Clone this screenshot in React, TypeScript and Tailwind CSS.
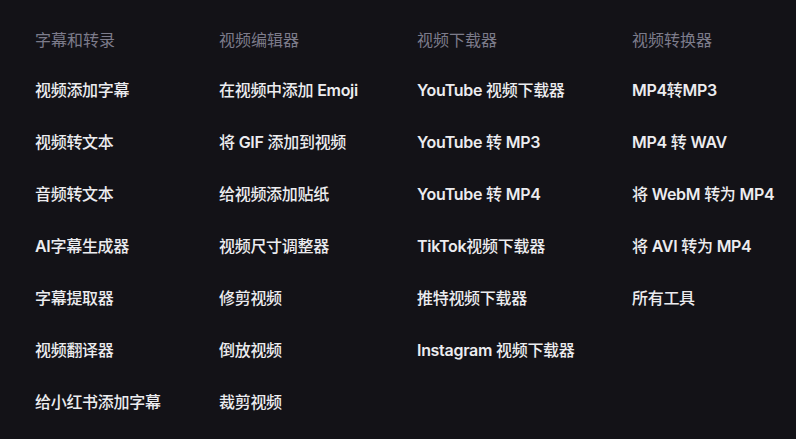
import React from "react";

const columns: { title: string; items: string[]; w: string }[] = [
  {
    title: "字幕和转录",
    w: "w-[184px]",
    items: ["视频添加字幕", "视频转文本", "音频转文本", "AI字幕生成器", "字幕提取器", "视频翻译器", "给小红书添加字幕"],
  },
  {
    title: "视频编辑器",
    w: "w-[198px]",
    items: ["在视频中添加 Emoji", "将 GIF 添加到视频", "给视频添加贴纸", "视频尺寸调整器", "修剪视频", "倒放视频", "裁剪视频"],
  },
  {
    title: "视频下载器",
    w: "w-[215px]",
    items: ["YouTube 视频下载器", "YouTube 转 MP3", "YouTube 转 MP4", "TikTok视频下载器", "推特视频下载器", "Instagram 视频下载器"],
  },
  {
    title: "视频转换器",
    w: "w-[164px]",
    items: ["MP4转MP3", "MP4 转 WAV", "将 WebM 转为 MP4", "将 AVI 转为 MP4", "所有工具"],
  },
];

function Label({ text }: { text: string }) {
  const parts = text.split(/([A-Za-z0-9]+)/).filter((p) => p.length > 0);
  return (
    <>
      {parts.map((p, i) =>
        /^[A-Za-z0-9]+$/.test(p) ? (
          <span key={i} className="font-semibold">
            {p}
          </span>
        ) : (
          <span key={i}>{p}</span>
        )
      )}
    </>
  );
}

export default function App() {
  return (
    <div
      className="w-[796px] h-[439px] bg-[#131217] overflow-hidden"
      style={{ fontFamily: 'Inter, "Noto Sans CJK SC", sans-serif' }}
    >
      <div className="flex pl-[35px] pt-[28px]">
        {columns.map((c) => (
          <div key={c.title} className={`${c.w} shrink-0 flex flex-col`}>
            <div className="text-[16px] leading-[24px] text-[#7c7b8a] mb-[26px]">{c.title}</div>
            <div className="flex flex-col gap-[28px]">
              {c.items.map((it) => (
                <div key={it} className="text-[16px] leading-[24px] font-medium text-[#ececef] whitespace-nowrap tracking-[-0.3px]">
                  <Label text={it} />
                </div>
              ))}
            </div>
          </div>
        ))}
      </div>
    </div>
  );
}
